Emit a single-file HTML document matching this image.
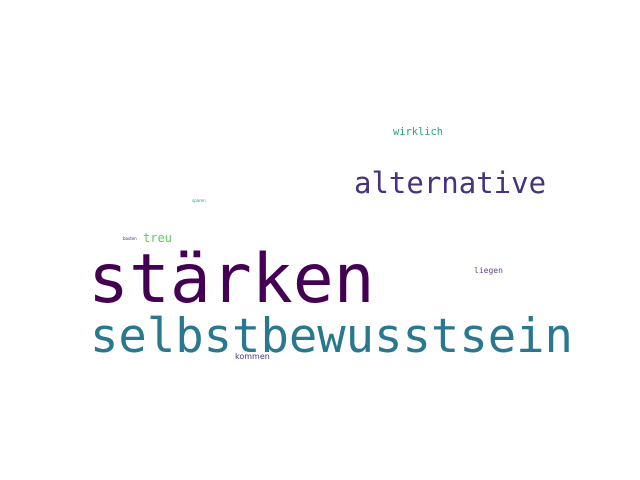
<!DOCTYPE html>
<html><head><style>html,body{margin:0;padding:0;background:#fff;width:640px;height:480px;overflow:hidden}</style></head>
<body>
<svg width="640" height="480" xmlns="http://www.w3.org/2000/svg" style="display:block">
<g font-family="DejaVu Sans Mono, Liberation Mono, monospace">
<text x="88" y="302" font-size="68" fill="#440154">stärken</text>
<text x="90" y="352" font-size="47.2" fill="#2a788e">selbstbewusstsein</text>
<text x="354" y="193" font-size="29" fill="#46327e">alternative</text>
<text x="393" y="135" font-size="10.4" fill="#22a884">wirklich</text>
<text x="143" y="242" font-size="12" fill="#5ec962">treu</text>
<text x="474" y="273" font-size="8" fill="#6b3f86">liegen</text>
</g>
<g font-family="DejaVu Sans, Liberation Sans, sans-serif">
<text x="235" y="359" font-size="8" fill="#453781">kommen</text>
<text x="192" y="202" font-size="4" fill="#2a9d8f">sparen</text>
<text x="123" y="240" font-size="4" fill="#482878">basten</text>
</g>
</svg>
</body></html>
